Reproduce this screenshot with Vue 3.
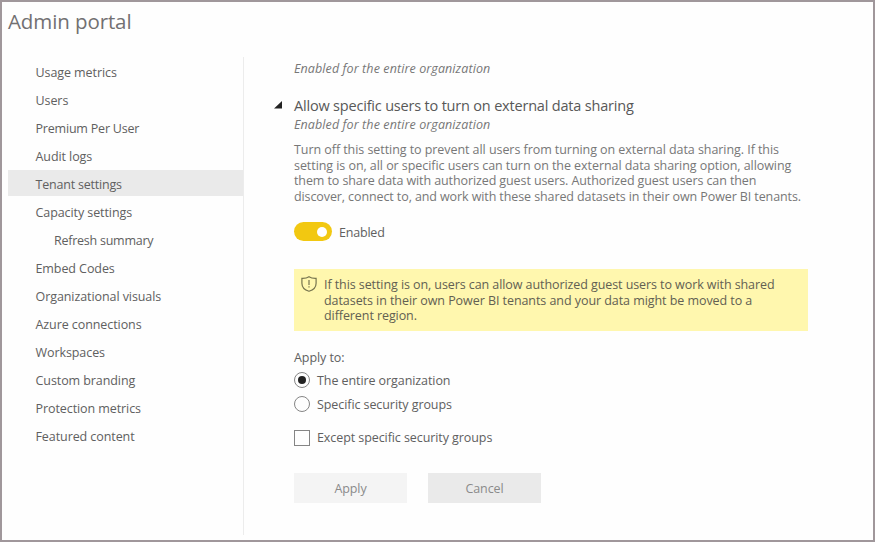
<script setup>
import { ref } from 'vue'

const items = [
  'Usage metrics', 'Users', 'Premium Per User', 'Audit logs', 'Tenant settings',
  'Capacity settings', 'Refresh summary', 'Embed Codes', 'Organizational visuals',
  'Azure connections', 'Workspaces', 'Custom branding', 'Protection metrics', 'Featured content',
]
const current = ref('Tenant settings')
const enabled = ref(true)
const scope = ref('all')
const except = ref(false)
</script>

<template>
  <div class="portal">
    <h1 class="title">Admin portal</h1>
    <div class="body">
      <nav class="side">
        <a
          v-for="item in items"
          :key="item"
          class="item"
          :class="{ active: item === current, nested: item === 'Refresh summary', tight: item.startsWith('T') || item.startsWith('Prem') }"
          @click="current = item"
        >{{ item }}</a>
      </nav>
      <main class="main">
        <p class="status">Enabled for the entire organization</p>
        <div class="heading">
          <svg class="arrow" viewBox="0 0 8 8"><path d="M8 0V7.600H0Z" fill="#222" /></svg>
          <h2>Allow specific users to turn on external data sharing</h2>
        </div>
        <p class="status second">Enabled for the entire organization</p>
        <p class="desc">
          <span class="loose">Turn off this setting to prevent all users from turning on external data sharing. If this</span><br>
          <span class="loose">setting is on, all or specific users can turn on the external data sharing option, allowing</span><br>
          them to share data with authorized guest users. Authorized guest users can then<br>
          discover, connect to, and work with these shared datasets in their own Power BI tenants.
        </p>
        <div class="toggle-row" @click="enabled = !enabled">
          <span class="toggle" :class="{ off: !enabled }"><span class="knob" /></span>
          <span class="label">Enabled</span>
        </div>
        <div class="notice">
          <svg class="shield" viewBox="0 0 16 16" fill="none" stroke="#77754f" stroke-width="1.2">
            <path d="M8 .8C6.200 2 3.700 2.500 .9 2.400V7.200C.9 11.400 3.800 14 8 15.300C12.200 14 15.100 11.400 15.100 7.200V2.400C12.300 2.500 9.800 2 8 .8Z" />
            <path d="M8 4V9M8 10.200V11.600" />
          </svg>
          <p>
            If this setting is on, users can allow authorized guest users to work with shared<br>
            <span class="loose">datasets in their own Power BI tenants and your data might be moved to a</span><br>
            different region.
          </p>
        </div>
        <p class="apply-to">Apply to:</p>
        <div class="choice first" @click="scope = 'all'">
          <span class="radio" :class="{ on: scope === 'all' }" /><span class="label">The entire organization</span>
        </div>
        <div class="choice" @click="scope = 'groups'">
          <span class="radio" :class="{ on: scope === 'groups' }" /><span class="label">Specific security groups</span>
        </div>
        <div class="choice except" @click="except = !except">
          <span class="check" :class="{ ticked: except }" /><span>Except specific security groups</span>
        </div>
        <div class="buttons">
          <button class="apply">Apply</button>
          <button>Cancel</button>
        </div>
      </main>
    </div>
  </div>
</template>

<style>
body { margin: 0; background: #fff; }
</style>

<style scoped>
.portal {
  box-sizing: border-box;
  width: 875px;
  height: 542px;
  border: 2px solid #a0979b;
  background: #fefefe;
  color: #606060;
  font-family: "Open Sans", "Noto Sans", sans-serif;
  font-size: 12.5px;
  letter-spacing: -0.08px;
  overflow: hidden;
}
h1, h2, p { margin: 0; font-weight: 400; }
.title {
  height: 55px;
  padding: 5px 0 0 6px;
  box-sizing: border-box;
  font-size: 20.5px;
  line-height: 28px;
  color: #727072;
  letter-spacing: -0.1px;
}
.body { display: flex; padding-left: 6px; }
.side {
  box-sizing: border-box;
  width: 236px;
  height: 478px;
  padding-top: 1px;
  border-right: 1px solid #ececec;
  display: flex;
  flex-direction: column;
  gap: 2px;
}
.item { height: 26px; line-height: 29px; padding-left: 27.5px; cursor: pointer; }
.tight { letter-spacing: -0.2px; }
.nested { padding-left: 46px; letter-spacing: -0.25px; }
.active { background: #eaeaea; }
.main { padding-left: 50px; width: 514px; white-space: nowrap; }
.status { font-style: italic; font-size: 12.5px; letter-spacing: 0.1px; line-height: 16px; color: #777; padding-top: 4px; }
.heading { display: flex; align-items: center; gap: 12px; margin: 18px 0 0 -20px; height: 22px; }
.arrow { width: 8px; height: 8px; margin-top: -2px; }
h2 { font-size: 14.5px; line-height: 22px; color: #585858; letter-spacing: -0.19px; }
.second { padding-top: 0; }
.desc { margin-top: 9px; line-height: 15.7px; color: #777; letter-spacing: -0.1px; }
.loose { letter-spacing: -0.06px; }
.toggle-row { display: flex; align-items: center; gap: 7px; margin-top: 17px; height: 20px; letter-spacing: -0.2px; }
.label { padding-top: 2px; }
.toggle {
  box-sizing: border-box;
  width: 38px;
  height: 19px;
  border-radius: 10px;
  background: #f2c811;
  display: flex;
  align-items: center;
  justify-content: flex-end;
  padding: 0 5px;
}
.toggle.off { justify-content: flex-start; background: #aaa; }
.knob { width: 10px; height: 10px; border-radius: 50%; background: #fff; }
.notice {
  box-sizing: border-box;
  display: flex;
  gap: 7px;
  margin-top: 27px;
  height: 62px;
  padding: 7px;
  background: #fff7ae;
  color: #626052;
  line-height: 15.7px;
}
.notice p { padding-top: 1px; }
.shield { width: 16px; height: 16px; }
.apply-to { margin-top: 18px; line-height: 18px; }
.choice { display: flex; align-items: center; gap: 7px; height: 20px; }
.first { margin: 3px 0 4px; }
.except { margin-top: 14px; }
.radio, .check { box-sizing: border-box; width: 16px; height: 16px; border: 1px solid #858585; }
.radio { border-radius: 50%; display: grid; place-items: center; }
.radio.on::after { content: ""; width: 8px; height: 8px; border-radius: 50%; background: #222; }
.check.ticked { background: #777; }
.buttons { display: flex; gap: 21px; margin-top: 25px; }
button {
  width: 113px;
  height: 30px;
  padding: 2px 0 0;
  border: 0;
  background: #eaeaea;
  color: #8a8a8a;
  font: inherit;
  letter-spacing: inherit;
}
.apply { background: #f4f4f4; }
</style>
